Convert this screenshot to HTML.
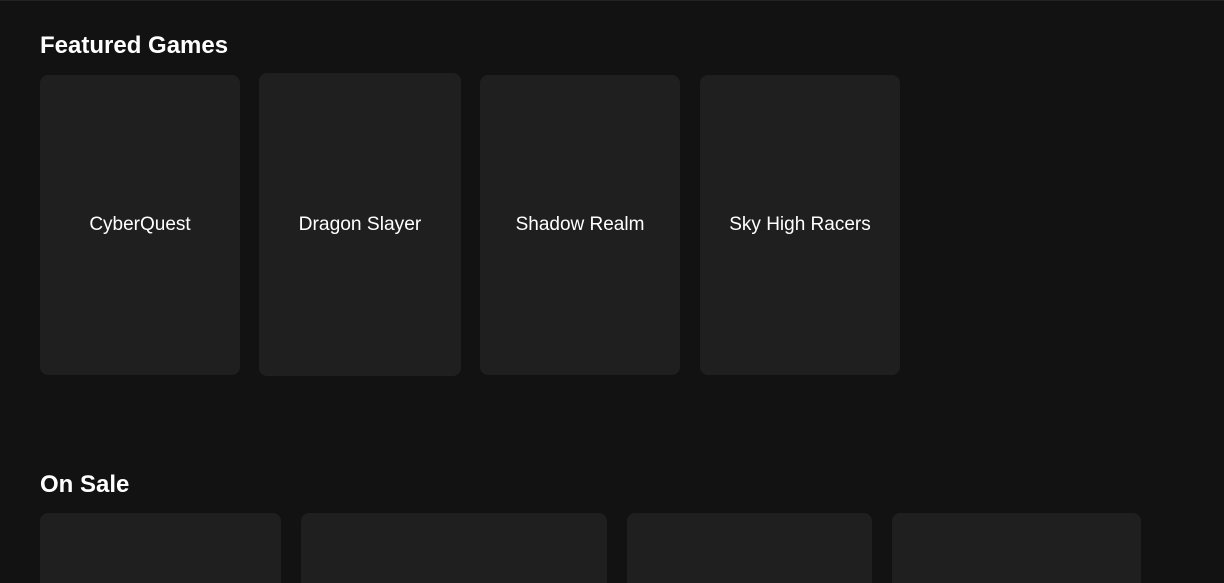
<!DOCTYPE html>
<html><head><style>
html,body{margin:0;padding:0;background:#121212;width:1224px;height:583px;overflow:hidden;font-family:"Liberation Sans",Arial,sans-serif;}
.top{position:absolute;left:0;top:0;width:1224px;height:1px;background:#222;}
h2{position:absolute;left:40px;margin:0;color:#fff;font-size:24px;font-weight:bold;line-height:28px;}
.card{position:absolute;background:#1f1f1f;border-radius:8px;color:#fff;font-size:19px;display:flex;align-items:center;justify-content:center;line-height:22px;}
</style></head><body>
<div class="top"></div>
<h2 style="top:32px">Featured Games</h2>
<div class="card" style="left:40px;top:75px;width:200px;height:300px">CyberQuest</div>
<div class="card" style="left:259px;top:73px;width:202px;height:303px;font-size:19.2px">Dragon Slayer</div>
<div class="card" style="left:480px;top:75px;width:200px;height:300px">Shadow Realm</div>
<div class="card" style="left:700px;top:75px;width:200px;height:300px">Sky High Racers</div>
<h2 style="top:471px">On Sale</h2>
<div class="card" style="left:40px;top:513px;width:241px;height:70px;border-radius:8px 8px 0 0"></div>
<div class="card" style="left:301px;top:513px;width:306px;height:70px;border-radius:8px 8px 0 0"></div>
<div class="card" style="left:627px;top:513px;width:245px;height:70px;border-radius:8px 8px 0 0"></div>
<div class="card" style="left:892px;top:513px;width:249px;height:70px;border-radius:8px 8px 0 0"></div>
</body></html>
